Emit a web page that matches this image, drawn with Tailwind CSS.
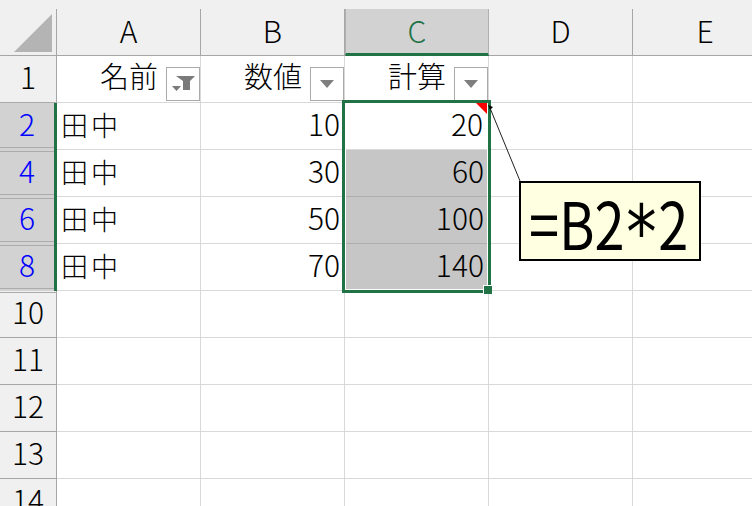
<!DOCTYPE html>
<html lang="ja">
<head>
<meta charset="UTF-8">
<title>Excel</title>
<script src="https://cdn.jsdelivr.net/npm/@tailwindcss/browser@4"></script>
</head>
<body class="bg-white">
<div class="relative w-[752px] h-[506px] overflow-hidden bg-white text-[30px] leading-none text-black font-['Noto_Sans_CJK_JP','Noto_Sans',sans-serif] font-light">
  <div class="h-[9px] bg-[#f0f0f0]"></div>
  <div class="grid grid-cols-[57px_144px_144px_144px_144px_144px] auto-rows-[47px]">
    <!-- column headers -->
    <div class="flex items-end justify-end bg-[#f0f0f0] border-r border-b border-[#a6a6a6] pr-[3px] pb-[2px]">
      <svg width="40" height="40" viewBox="0 0 40 40"><path d="M39 1V39H1Z" fill="#b4b4b4"/></svg>
    </div>
    <div class="flex items-center justify-center pb-[4px] bg-[#f0f0f0] border-r border-b border-[#a6a6a6]">A</div>
    <div class="flex items-center justify-center pb-[4px] bg-[#f0f0f0] border-r border-b border-[#a6a6a6]">B</div>
    <div class="flex items-center justify-center pb-[3px] bg-[#d2d2d2] border-x border-[#b0b0b0] border-b-[3px] border-b-[#217346] text-[#217346]">C</div>
    <div class="flex items-center justify-center pb-[4px] bg-[#f0f0f0] border-r border-b border-[#a6a6a6]">D</div>
    <div class="flex items-center justify-center pb-[4px] bg-[#f0f0f0] border-b border-[#a6a6a6]">E</div>

    <!-- row 1 -->
    <div class="flex items-center justify-center pb-[7px] bg-[#f0f0f0] border-r border-b border-r-[#a6a6a6] border-b-[#ababab]">1</div>
    <div class="flex items-center justify-end gap-[8px] border-r border-b border-[#d9d9d9] pl-1">
      <span class="mb-[7px] text-[29px]">名前</span>
      <span class="mt-[10px] w-[34px] h-[34px] flex items-center justify-center bg-white border border-[#ababab]">
        <svg width="30" height="26" viewBox="0 0 30 26"><path d="M8 5H27L22 10V19H15V10Z M4 15H13L8.5 20Z" fill="#7a7a7a"/></svg>
      </span>
    </div>
    <div class="flex items-center justify-end gap-[8px] border-r border-b border-[#d9d9d9]">
      <span class="mb-[7px] text-[29px]">数値</span>
      <span class="mt-[10px] w-[34px] h-[34px] flex items-center justify-center bg-white border border-[#ababab]">
        <svg width="14" height="8" viewBox="0 0 14 8"><path d="M0 0H14L7 8Z" fill="#7f7f7f"/></svg>
      </span>
    </div>
    <div class="flex items-center justify-end gap-[8px] border-r border-b border-[#d9d9d9]">
      <span class="mb-[7px] text-[29px]">計算</span>
      <span class="mt-[10px] w-[34px] h-[34px] flex items-center justify-center bg-white border border-[#ababab]">
        <svg width="14" height="8" viewBox="0 0 14 8"><path d="M0 0H14L7 8Z" fill="#7f7f7f"/></svg>
      </span>
    </div>
    <div class="border-r border-b border-[#d9d9d9]"></div>
    <div class="border-b border-[#d9d9d9]"></div>

    <!-- row 2, the hidden rows leave a double line in the row header -->
    <div class="flex items-center justify-center pb-[7px] bg-[#d2d2d2] border-r-[3px] border-r-[#217346] text-[#0000ff] shadow-[inset_0_-2px_0_#d2d2d2,inset_0_-3px_0_#ababab]">2</div>
    <div class="flex items-center pl-[4px] pb-[3px] text-[27px] tracking-[3px] border-r border-b border-[#d9d9d9]">田中</div>
    <div class="flex items-center justify-end pr-[4px] pb-[7px] border-r border-b border-[#d9d9d9]">10</div>
    <div class="flex items-center justify-end pr-[5px] pb-[7px] border-r border-b border-[#d9d9d9]">20</div>
    <div class="border-r border-b border-[#d9d9d9]"></div>
    <div class="border-b border-[#d9d9d9]"></div>

    <!-- row 4 -->
    <div class="flex items-center justify-center pb-[7px] bg-[#d2d2d2] border-r-[3px] border-r-[#217346] text-[#0000ff] shadow-[inset_0_1px_0_#d2d2d2,inset_0_2px_0_#ababab,inset_0_-2px_0_#d2d2d2,inset_0_-3px_0_#ababab]">4</div>
    <div class="flex items-center pl-[4px] pb-[3px] text-[27px] tracking-[3px] border-r border-b border-[#d9d9d9]">田中</div>
    <div class="flex items-center justify-end pr-[4px] pb-[7px] border-r border-b border-[#d9d9d9]">30</div>
    <div class="flex items-center justify-end pr-[5px] pb-[7px] bg-[#c6c6c6] border-b border-[#aeaeae]">60</div>
    <div class="border-r border-b border-[#d9d9d9]"></div>
    <div class="border-b border-[#d9d9d9]"></div>

    <!-- row 6 -->
    <div class="flex items-center justify-center pb-[7px] bg-[#d2d2d2] border-r-[3px] border-r-[#217346] text-[#0000ff] shadow-[inset_0_1px_0_#d2d2d2,inset_0_2px_0_#ababab,inset_0_-2px_0_#d2d2d2,inset_0_-3px_0_#ababab]">6</div>
    <div class="flex items-center pl-[4px] pb-[3px] text-[27px] tracking-[3px] border-r border-b border-[#d9d9d9]">田中</div>
    <div class="flex items-center justify-end pr-[4px] pb-[7px] border-r border-b border-[#d9d9d9]">50</div>
    <div class="flex items-center justify-end pr-[5px] pb-[7px] bg-[#c6c6c6] border-b border-[#aeaeae]">100</div>
    <div class="border-r border-b border-[#d9d9d9]"></div>
    <div class="border-b border-[#d9d9d9]"></div>

    <!-- row 8 -->
    <div class="flex items-center justify-center pb-[7px] bg-[#d2d2d2] border-r-[3px] border-r-[#217346] text-[#0000ff] shadow-[inset_0_1px_0_#d2d2d2,inset_0_2px_0_#ababab,inset_0_-2px_0_#d2d2d2,inset_0_-3px_0_#ababab]">8</div>
    <div class="flex items-center pl-[4px] pb-[3px] text-[27px] tracking-[3px] border-r border-b border-[#d9d9d9]">田中</div>
    <div class="flex items-center justify-end pr-[4px] pb-[7px] border-r border-b border-[#d9d9d9]">70</div>
    <div class="flex items-center justify-end pr-[5px] pb-[7px] bg-[#c6c6c6] border-b border-[#aeaeae]">140</div>
    <div class="border-r border-b border-[#d9d9d9]"></div>
    <div class="border-b border-[#d9d9d9]"></div>

    <!-- empty rows -->
    <div class="flex items-center justify-center pb-[7px] bg-[#f0f0f0] border-r border-b border-[#a6a6a6] shadow-[inset_0_1px_0_#f0f0f0,inset_0_2px_0_#ababab]">10</div>
    <div class="border-r border-b border-[#d9d9d9]"></div><div class="border-r border-b border-[#d9d9d9]"></div><div class="border-r border-b border-[#d9d9d9]"></div><div class="border-r border-b border-[#d9d9d9]"></div><div class="border-b border-[#d9d9d9]"></div>
    <div class="flex items-center justify-center pb-[7px] bg-[#f0f0f0] border-r border-b border-[#a6a6a6]">11</div>
    <div class="border-r border-b border-[#d9d9d9]"></div><div class="border-r border-b border-[#d9d9d9]"></div><div class="border-r border-b border-[#d9d9d9]"></div><div class="border-r border-b border-[#d9d9d9]"></div><div class="border-b border-[#d9d9d9]"></div>
    <div class="flex items-center justify-center pb-[7px] bg-[#f0f0f0] border-r border-b border-[#a6a6a6]">12</div>
    <div class="border-r border-b border-[#d9d9d9]"></div><div class="border-r border-b border-[#d9d9d9]"></div><div class="border-r border-b border-[#d9d9d9]"></div><div class="border-r border-b border-[#d9d9d9]"></div><div class="border-b border-[#d9d9d9]"></div>
    <div class="flex items-center justify-center pb-[7px] bg-[#f0f0f0] border-r border-b border-[#a6a6a6]">13</div>
    <div class="border-r border-b border-[#d9d9d9]"></div><div class="border-r border-b border-[#d9d9d9]"></div><div class="border-r border-b border-[#d9d9d9]"></div><div class="border-r border-b border-[#d9d9d9]"></div><div class="border-b border-[#d9d9d9]"></div>
    <div class="flex items-center justify-center pb-[7px] bg-[#f0f0f0] border-r border-b border-[#a6a6a6]">14</div>
    <div class="border-r border-b border-[#d9d9d9]"></div><div class="border-r border-b border-[#d9d9d9]"></div><div class="border-r border-b border-[#d9d9d9]"></div><div class="border-r border-b border-[#d9d9d9]"></div><div class="border-b border-[#d9d9d9]"></div>
  </div>

  <!-- selection -->
  <div class="absolute left-[342px] top-[100px] w-[149px] h-[193px] border-[3px] border-[#217346] shadow-[inset_0_0_0_1px_white]"></div>
  <div class="absolute left-[483px] top-[285px] w-[9px] h-[9px] bg-[#217346] border-l border-t border-white"></div>

  <!-- comment indicator and leader -->
  <svg class="absolute left-0 top-0" width="752" height="506" viewBox="0 0 752 506">
    <path d="M476 103H487V114Z" fill="#ff0000"/>
    <path d="M490 108L520 181" stroke="#222" fill="none"/>
    <path d="M488 105L493 107L490 110Z" fill="#000"/>
  </svg>

  <!-- comment -->
  <div class="absolute left-[519px] top-[181px] w-[182px] h-[80px] bg-[#ffffe1] border-2 border-black flex items-center">
    <span class="flex items-center origin-left scale-x-[0.82] ml-[8px] text-[66px] leading-none font-normal whitespace-nowrap">=B2<span class="mx-[2px] mt-[22px] text-[74px] font-['DejaVu_Sans']">*</span>2</span>
  </div>
</div>
</body>
</html>
